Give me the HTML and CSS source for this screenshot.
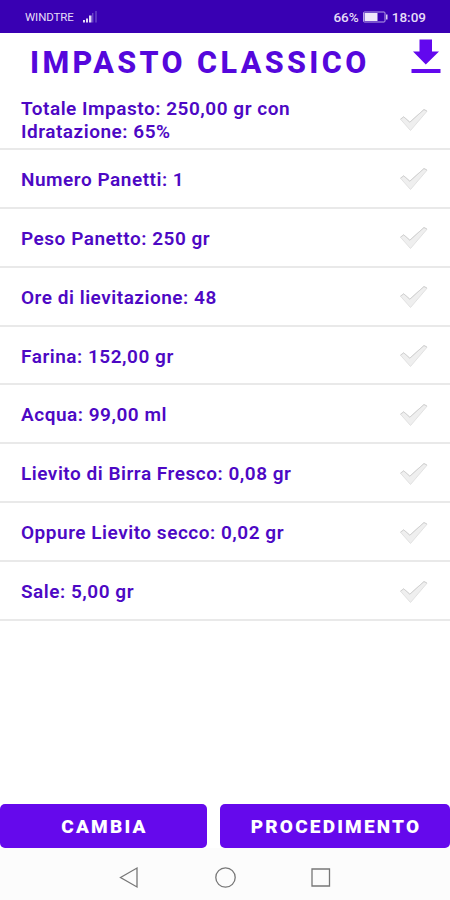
FILE: index.html
```html
<!DOCTYPE html>
<html lang="it">
<head>
<meta charset="utf-8">
<title>Impasto Classico</title>
<link rel="stylesheet" href="styles.css">
</head>
<body>
<svg class="defs" width="0" height="0">
  <symbol id="check" viewBox="0 0 30 26">
    <path d="M1.500 12.200L4.700 9.800L10.800 15.200L25 2.500L28 4.200L11.500 23.500Z" fill="#efefef" stroke="#e2e2e2" stroke-width="1" stroke-linejoin="round"/>
    <path d="M1.500 12.200L4.700 9.800L10.800 15.200L25 2.500L28 4.200" fill="none" stroke="#d2d2d2" stroke-width="1"/>
  </symbol>
</svg>
<div class="screen">
  <div class="status">
    <span class="carrier">WINDTRE</span>
    <svg class="signal" width="16" height="14" viewBox="0 0 16 14"><path d="M1 10h2v2.500H1zM4 8.500h2v4H4zM7 5.500h2.500v7H7z" fill="#e5dcf7"/><path d="M10.300 3h1v9.500h-1zM13.500 1h1v11.500h-1z" fill="#8063cf"/></svg>
    <span class="percent">66%</span>
    <svg class="battery" width="25" height="12" viewBox="0 0 25 12"><path d="M1.500 1h19.500q1 0 1 1v8q0 1-1 1H1.500q-1 0-1-1V2q0-1 1-1z" fill="none" stroke="#b8a5e6"/><path d="M1.500 2h13v8h-13z" fill="#eee7fa"/><path d="M23 3.500h1.500v5H23z" fill="#d9cdf2"/></svg>
    <span class="time">18:09</span>
  </div>
  <header class="header">
    <h1 class="title">IMPASTO CLASSICO</h1>
    <svg class="download" width="30" height="35" viewBox="0 0 30 35"><path d="M8.500 0.500h12.500v12h7L14.800 25.500L2 12.500h6.500zM0.500 30h29v4h-29z" fill="#6208ee"/></svg>
  </header>
  <ul class="list">
    <li class="row"><span class="label">Totale Impasto: 250,00 gr con<br>Idratazione: 65%</span><svg class="check"><use href="#check"/></svg></li>
    <li class="row"><span class="label">Numero Panetti: 1</span><svg class="check"><use href="#check"/></svg></li>
    <li class="row"><span class="label">Peso Panetto: 250 gr</span><svg class="check"><use href="#check"/></svg></li>
    <li class="row"><span class="label">Ore di lievitazione: 48</span><svg class="check"><use href="#check"/></svg></li>
    <li class="row"><span class="label">Farina: 152,00 gr</span><svg class="check"><use href="#check"/></svg></li>
    <li class="row"><span class="label">Acqua: 99,00 ml</span><svg class="check"><use href="#check"/></svg></li>
    <li class="row"><span class="label">Lievito di Birra Fresco: 0,08 gr</span><svg class="check"><use href="#check"/></svg></li>
    <li class="row"><span class="label">Oppure Lievito secco: 0,02 gr</span><svg class="check"><use href="#check"/></svg></li>
    <li class="row"><span class="label">Sale: 5,00 gr</span><svg class="check"><use href="#check"/></svg></li>
  </ul>
  <div class="actions">
    <button class="button">CAMBIA</button>
    <button class="button wide">PROCEDIMENTO</button>
  </div>
  <nav class="nav">
    <svg width="450" height="50" viewBox="0 0 450 50" fill="none" stroke="#777" stroke-width="1.300"><path d="M120.500 29.500L137 20V39Z"/><circle cx="225.500" cy="29.500" r="9.700"/><path d="M312 21h17.500v17H312z"/></svg>
  </nav>
</div>
</body>
</html>
```
FILE: styles.css
```css
* { box-sizing: border-box; }
body { margin: 0; background: #fff; font-family: Roboto, sans-serif; }
.defs { display: none; }
.screen { width: 450px; height: 900px; display: flex; flex-direction: column; overflow: hidden; }
.status { height: 33px; flex: none; display: flex; align-items: center; background: #3900b3; color: #e5dcf7; padding: 1px 24px 0 25px; white-space: nowrap; }
.carrier { font-size: 11.5px; letter-spacing: -0.1px; }
.signal { margin-left: 8px; }
.percent { margin-left: auto; font-size: 13.500px; font-weight: 500; }
.battery { margin: 0 4px; }
.time { font-size: 13.500px; font-weight: 500; }
.header { height: 58px; flex: none; display: flex; justify-content: space-between; padding: 6px 9.500px 0 30px; }
.title { margin: 5px 0 0; font-size: 30.500px; line-height: 38px; font-weight: 800; letter-spacing: 3.400px; color: #5507dc; white-space: nowrap; }
.download { flex: none; }
.list { list-style: none; margin: 0; padding: 0; flex: 1; }
.row { height: 58.900px; display: flex; align-items: center; justify-content: space-between; padding: 2px 21px 0 21px; border-bottom: 2px solid #e9e9e9; }
.label { font-size: 19px; line-height: 23px; font-weight: 600; letter-spacing: 0.520px; color: #4d08c4; white-space: nowrap; }
.check { width: 30px; height: 26px; flex: none; }
.actions { height: 44px; flex: none; display: flex; gap: 13px; }
.button { width: 207px; height: 44px; border: 0; border-radius: 5px; padding: 1px 0 0 2px; background: #6509ec; color: #fff; font: 900 19px/43px Roboto, sans-serif; letter-spacing: 2.200px; }
.wide { width: 230px; }
.nav { height: 52px; flex: none; background: #fcfcfc; }
.nav svg { display: block; }
```
